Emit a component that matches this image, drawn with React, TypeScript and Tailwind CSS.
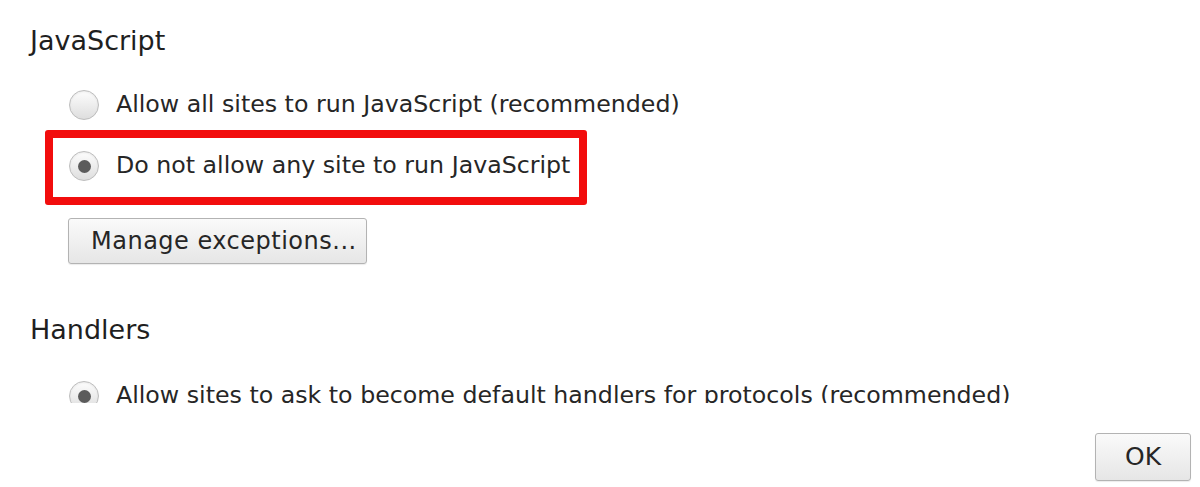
function Radio({ checked }: { checked?: boolean }) {
  return (
    <span className="flex h-[30px] w-[30px] shrink-0 items-center justify-center rounded-full border border-[#bdbdbd] bg-linear-to-b from-[#fdfdfd] to-[#dedede] shadow-[inset_0_1px_2px_rgba(0,0,0,0.08)]">
      {checked && <span className="h-[13px] w-[13px] rounded-full bg-[#5b5b5b]" />}
    </span>
  );
}

function Option({ label, checked }: { label: string; checked?: boolean }) {
  return (
    <div className="flex h-[40px] items-center gap-[17px]">
      <Radio checked={checked} />
      <span className="whitespace-nowrap text-[23.7px] text-[#262626]">{label}</span>
    </div>
  );
}

export default function App() {
  return (
    <div className="flex h-[487px] w-[1200px] flex-col bg-white font-['DejaVu_Sans',sans-serif]">
      {/* scrolling settings pane, clipped mid-row like the original */}
      <div className="h-[403px] shrink-0 overflow-hidden pt-[25px]">
        <h2 className="pl-[30px] text-[27px] leading-[32px] text-[#1f1f1f]">JavaScript</h2>

        <div className="mt-[28px] pl-[69px]">
          <Option label="Allow all sites to run JavaScript (recommended)" />
        </div>

        <div className="mt-[5px] pl-[45px]">
          <div className="w-fit rounded-[3px] border-[8px] border-[#f20d0d] pt-[8px] pb-[11px] pr-[9px] pl-[16px]">
            <Option label="Do not allow any site to run JavaScript" checked />
          </div>
        </div>

        <div className="mt-[13px] pl-[68px]">
          <button className="flex h-[46px] w-[299px] items-center rounded-[3px] border border-[#b3b3b3] bg-linear-to-b from-[#fafafa] to-[#e6e6e6] pl-[22px] text-[24px] tracking-[0.5px] text-[#262626] shadow-[0_1px_1px_rgba(0,0,0,0.08)]">
            Manage exceptions...
          </button>
        </div>

        <h2 className="mt-[50px] pl-[30px] text-[27px] leading-[32px] text-[#1f1f1f]">Handlers</h2>

        <div className="mt-[30px] pl-[69px]">
          <Option label="Allow sites to ask to become default handlers for protocols (recommended)" checked />
        </div>
      </div>

      <div className="flex flex-1 items-start justify-end pt-[30px] pr-[9px]">
        <button className="flex h-[48px] w-[96px] items-center justify-center rounded-[3px] border border-[#b3b3b3] bg-linear-to-b from-[#fafafa] to-[#e6e6e6] text-[25px] text-[#262626] shadow-[0_1px_1px_rgba(0,0,0,0.08)]">
          OK
        </button>
      </div>
    </div>
  );
}
